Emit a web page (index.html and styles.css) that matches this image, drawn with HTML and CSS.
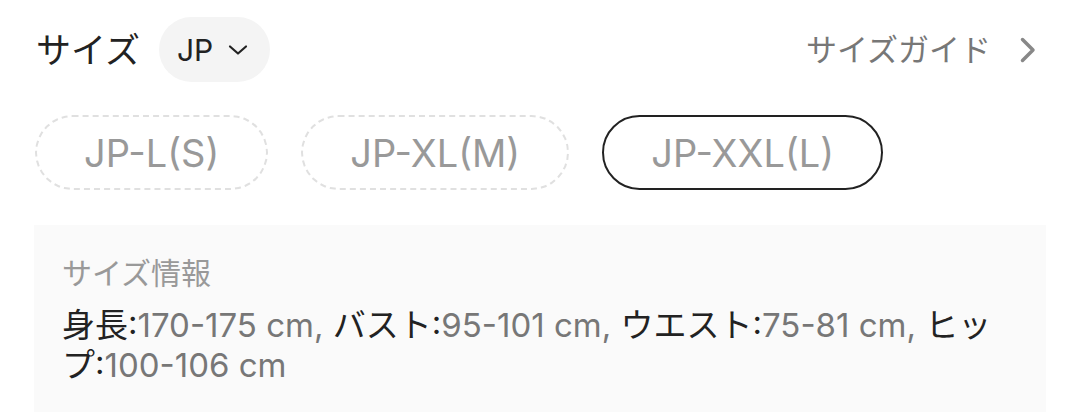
FILE: index.html
```html
<!DOCTYPE html>
<html lang="ja">
<head>
<meta charset="utf-8">
<link rel="stylesheet" href="styles.css">
</head>
<body>
<div class="page">
  <div class="header">
    <div class="header-left">
      <span class="title">サイズ</span>
      <button class="region">
        <span class="region-label">JP</span>
        <svg class="region-chevron" width="20" height="12" viewBox="0 0 20 12"><path d="M2 2.5 L10 9.5 L18 2.5" fill="none" stroke="#222" stroke-width="2.2" stroke-linecap="round" stroke-linejoin="round"/></svg>
      </button>
    </div>
    <div class="guide">
      <span class="guide-label">サイズガイド</span>
      <svg class="guide-chevron" width="18" height="28" viewBox="0 0 18 28"><path d="M3.5 3.5 L14 14 L3.5 24.5" fill="none" stroke="#888" stroke-width="3.5" stroke-linecap="round" stroke-linejoin="round"/></svg>
    </div>
  </div>
  <div class="sizes">
    <div class="size size-disabled">JP-L(S)</div>
    <div class="size size-disabled">JP-XL(M)</div>
    <div class="size size-selected">JP-XXL(L)</div>
  </div>
  <div class="info">
    <div class="info-title">サイズ情報</div>
    <div class="info-body"><span class="k">身長:</span><span class="v">170-175 cm, </span><span class="k">バスト:</span><span class="v">95-101 cm, </span><span class="k">ウエスト:</span><span class="v">75-81 cm, </span><span class="k">ヒップ:</span><span class="v">100-106 cm</span></div>
  </div>
</div>
</body>
</html>
```

FILE: styles.css
```css
html, body {
  margin: 0;
  padding: 0;
  background: #fff;
}
body {
  font-family: "Inter", "Noto Sans CJK JP", sans-serif;
  color: #222;
}
.page {
  padding: 17px 34px 0 34px;
}
.header {
  display: flex;
  align-items: center;
  justify-content: space-between;
  height: 65px;
}
.header-left {
  display: flex;
  align-items: center;
  gap: 19px;
}
.title {
  font-size: 35px;
  line-height: 40px;
  color: #222;
  padding-left: 2px;
}
.region {
  display: flex;
  align-items: center;
  gap: 15px;
  height: 65px;
  padding: 0 22px 0 18px;
  border: none;
  border-radius: 33px;
  background: #f4f4f4;
  font-family: inherit;
  color: #222;
}
.region-label {
  font-size: 30px;
  line-height: 36px;
}
.region-chevron {
  display: block;
}
.guide {
  display: flex;
  align-items: center;
  gap: 28px;
  padding-right: 9px;
}
.guide-label {
  font-size: 31px;
  line-height: 40px;
  color: #777;
}
.guide-chevron {
  display: block;
}
.sizes {
  display: flex;
  gap: 33px;
  margin-top: 33px;
  padding-left: 1px;
}
.size {
  box-sizing: border-box;
  height: 75px;
  padding: 0 47px;
  border-radius: 38px;
  display: flex;
  align-items: center;
  font-size: 38px;
  color: #999;
}
.size-disabled {
  border: 2px dashed #e0e0e0;
}
.size-selected {
  border: 2px solid #222;
}
.info {
  margin-top: 35px;
  background: #fafafa;
  padding: 30px 45px 27px 28px;
}
.info-title {
  font-size: 30px;
  line-height: 36px;
  color: #999;
  margin-bottom: 14px;
}
.info-body {
  font-size: 33px;
  line-height: 40px;
}
.k {
  color: #222;
}
.v {
  color: #777;
}
```
